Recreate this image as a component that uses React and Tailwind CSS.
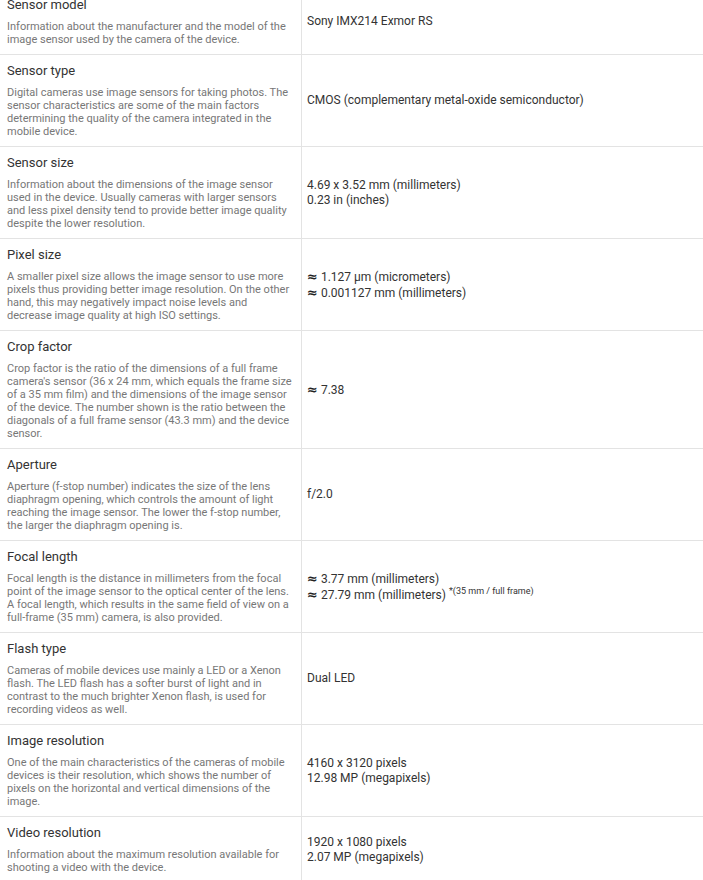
// App.jsx
const rows = [
  {
    title: "Sensor model",
    desc: "Information about the manufacturer and the model of the image sensor used by the camera of the device.",
    values: ["Sony IMX214 Exmor RS"],
  },
  {
    title: "Sensor type",
    desc: "Digital cameras use image sensors for taking photos. The sensor characteristics are some of the main factors determining the quality of the camera integrated in the mobile device.",
    values: ["CMOS (complementary metal-oxide semiconductor)"],
  },
  {
    title: "Sensor size",
    desc: "Information about the dimensions of the image sensor used in the device. Usually cameras with larger sensors and less pixel density tend to provide better image quality despite the lower resolution.",
    values: ["4.69 x 3.52 mm (millimeters)", "0.23 in (inches)"],
  },
  {
    title: "Pixel size",
    desc: "A smaller pixel size allows the image sensor to use more pixels thus providing better image resolution. On the other hand, this may negatively impact noise levels and decrease image quality at high ISO settings.",
    values: ["≈ 1.127 µm (micrometers)", "≈ 0.001127 mm (millimeters)"],
  },
  {
    title: "Crop factor",
    desc: "Crop factor is the ratio of the dimensions of a full frame camera's sensor (36 x 24 mm, which equals the frame size of a 35 mm film) and the dimensions of the image sensor of the device. The number shown is the ratio between the diagonals of a full frame sensor (43.3 mm) and the device sensor.",
    values: ["≈ 7.38"],
  },
  {
    title: "Aperture",
    desc: "Aperture (f-stop number) indicates the size of the lens diaphragm opening, which controls the amount of light reaching the image sensor. The lower the f-stop number, the larger the diaphragm opening is.",
    values: ["f/2.0"],
  },
  {
    title: "Focal length",
    desc: "Focal length is the distance in millimeters from the focal point of the image sensor to the optical center of the lens. A focal length, which results in the same field of view on a full-frame (35 mm) camera, is also provided.",
    values: ["≈ 3.77 mm (millimeters)", "≈ 27.79 mm (millimeters)"],
    note: "*(35 mm / full frame)",
  },
  {
    title: "Flash type",
    desc: "Cameras of mobile devices use mainly a LED or a Xenon flash. The LED flash has a softer burst of light and in contrast to the much brighter Xenon flash, is used for recording videos as well.",
    values: ["Dual LED"],
  },
  {
    title: "Image resolution",
    desc: "One of the main characteristics of the cameras of mobile devices is their resolution, which shows the number of pixels on the horizontal and vertical dimensions of the image.",
    values: ["4160 x 3120 pixels", "12.98 MP (megapixels)"],
  },
  {
    title: "Video resolution",
    desc: "Information about the maximum resolution available for shooting a video with the device.",
    values: ["1920 x 1080 pixels", "2.07 MP (megapixels)"],
  },
];

function Value({ text }) {
  // the approx sign is drawn larger and heavier than the number
  if (text.startsWith("≈ ")) {
    return (
      <>
        <span className="font-['DejaVu_Sans',sans-serif] text-[13px] leading-[15px] font-bold text-[#222]">≈</span>{" "}
        {text.slice(2)}
      </>
    );
  }
  return text;
}

export default function App() {
  return (
    <div className="w-[703px] h-[880px] overflow-hidden bg-white font-['Roboto',sans-serif]">
      <div className="-mt-[11px]">
        {rows.map((row) => (
          <div key={row.title} className="flex border-b border-[#e3e3e3]">
            <div className="w-[302px] shrink-0 border-r border-[#e3e3e3] pl-[7px] pr-[7px] pt-2 pb-2">
              <div className="text-[13px] leading-[15px] text-[#333] mb-2">{row.title}</div>
              <div className="text-[11px] leading-[13px] text-[#777]">{row.desc}</div>
            </div>
            <div className="flex-1 flex flex-col justify-center pl-[5px] text-[12px] leading-[15px] text-[#333]">
              {row.values.map((v, i) => (
                <div key={i}>
                  <Value text={v} />
                  {row.note && i === row.values.length - 1 && (
                    <sup className="text-[9px] ml-[3px] text-[#333]">{row.note}</sup>
                  )}
                </div>
              ))}
            </div>
          </div>
        ))}
      </div>
    </div>
  );
}
